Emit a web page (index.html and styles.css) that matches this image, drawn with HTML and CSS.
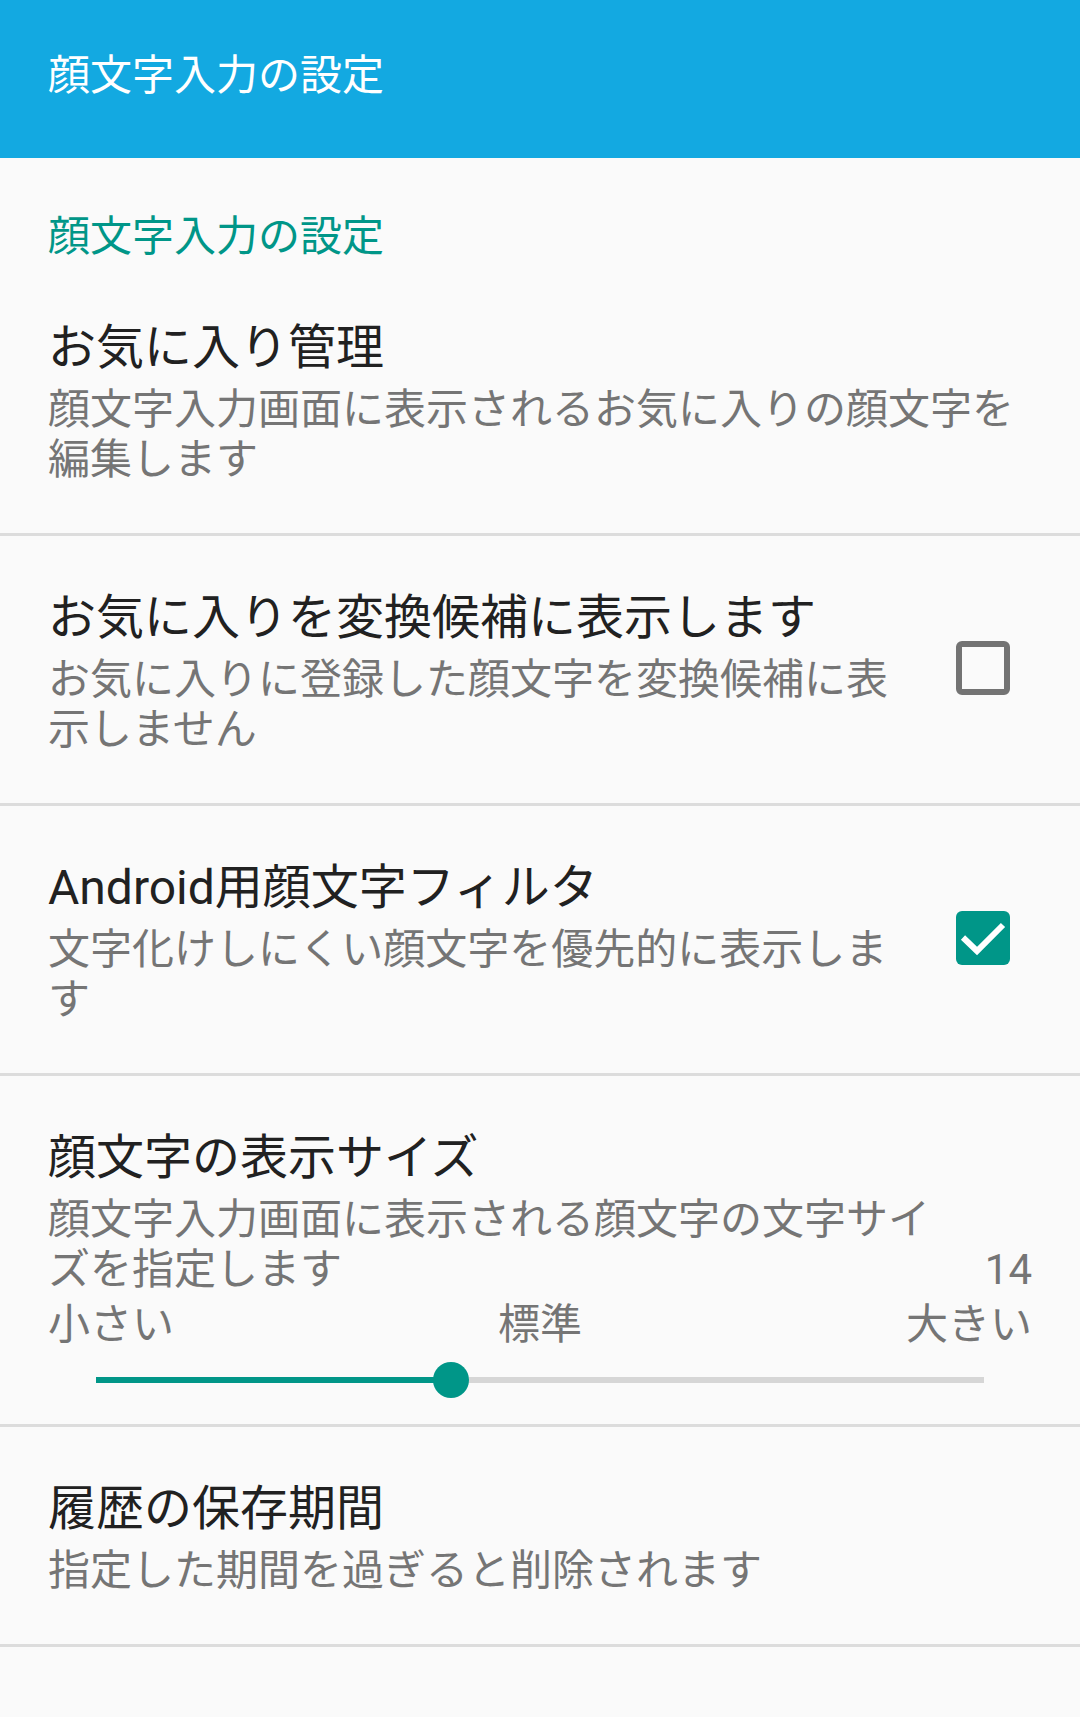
FILE: index.html
```html
<!DOCTYPE html>
<html lang="ja">
<head>
<meta charset="utf-8">
<title>顔文字入力の設定</title>
<link rel="stylesheet" href="styles.css">
</head>
<body>
<header class="appbar">
  <h1 class="appbar-title">顔文字入力の設定</h1>
</header>
<main class="prefs">
  <div class="category">顔文字入力の設定</div>

  <div class="pref">
    <div class="pref-text">
      <div class="pref-title">お気に入り管理</div>
      <div class="pref-summary">顔文字入力画面に表示されるお気に入りの顔文字を編集します</div>
    </div>
  </div>

  <div class="pref">
    <div class="pref-text">
      <div class="pref-title">お気に入りを変換候補に表示します</div>
      <div class="pref-summary">お気に入りに登録した顔文字を変換候補に表示しません</div>
    </div>
    <div class="widget"><span class="checkbox"></span></div>
  </div>

  <div class="pref">
    <div class="pref-text">
      <div class="pref-title">Android用顔文字フィルタ</div>
      <div class="pref-summary">文字化けしにくい顔文字を優先的に表示します</div>
    </div>
    <div class="widget">
      <span class="checkbox checked">
        <svg class="check" viewBox="0 0 54 54" width="54" height="54"><path d="M7 26.5 L21 40 L47 14" fill="none" stroke="#ffffff" stroke-width="6"/></svg>
      </span>
    </div>
  </div>

  <div class="pref pref-seek">
    <div class="seek-head">
      <div class="pref-text">
        <div class="pref-title">顔文字の表示サイズ</div>
        <div class="pref-summary">顔文字入力画面に表示される顔文字の文字サイズを指定します</div>
      </div>
      <div class="seek-value">14</div>
    </div>
    <div class="seek-labels"><span>小さい</span><span>標準</span><span>大きい</span></div>
    <div class="seek">
      <div class="seek-track">
        <div class="seek-fill" style="width:40%"></div>
        <div class="seek-thumb" style="left:40%"></div>
      </div>
    </div>
  </div>

  <div class="pref">
    <div class="pref-text">
      <div class="pref-title">履歴の保存期間</div>
      <div class="pref-summary">指定した期間を過ぎると削除されます</div>
    </div>
  </div>
</main>
</body>
</html>
```

FILE: styles.css
```css
html {
  background: #fafafa;
}
body {
  margin: 0;
  background: #fafafa;
  font-family: Roboto, "Noto Sans CJK JP", "Noto Sans", sans-serif;
  color: #212121;
}
.appbar {
  height: 158px;
  box-sizing: border-box;
  background: #13a9e1;
  padding: 54px 48px 0;
}
.appbar-title {
  margin: 0;
  font-size: 42px;
  line-height: 43px;
  font-weight: 400;
  color: #ffffff;
}
.category {
  padding: 58px 48px 8px;
  font-size: 42px;
  line-height: 42px;
  color: #009688;
}
.pref {
  display: flex;
  align-items: center;
  padding: 45px 48px 48px;
  border-bottom: 3px solid #dcdcdc;
}
.pref-text {
  flex: 1;
  min-width: 0;
}
.pref-title {
  font-size: 48px;
  line-height: 74px;
  color: #212121;
  white-space: nowrap;
}
.pref-summary {
  font-size: 42px;
  line-height: 50px;
  color: #757575;
}
.widget {
  display: flex;
  align-items: center;
  padding-left: 52px;
  margin-right: 22px;
}
.checkbox {
  display: block;
  width: 54px;
  height: 54px;
  box-sizing: border-box;
  border: 6px solid #737373;
  border-radius: 6px;
}
.checkbox.checked {
  border: none;
  background: #009688;
}
.check {
  display: block;
}
.pref-seek {
  display: block;
  padding-bottom: 14px;
}
.seek-head {
  display: flex;
  align-items: flex-end;
  gap: 30px;
}
.seek-value {
  font-size: 42px;
  line-height: 50px;
  color: #757575;
}
.seek-labels {
  display: flex;
  justify-content: space-between;
  margin-top: 5px;
  font-size: 42px;
  line-height: 50px;
  color: #757575;
}
.seek {
  height: 60px;
  display: flex;
  align-items: center;
  padding: 0 48px;
}
.seek-track {
  position: relative;
  flex: 1;
  height: 6px;
  background: #d6d6d6;
}
.seek-fill {
  height: 100%;
  background: #009688;
}
.seek-thumb {
  position: absolute;
  top: 50%;
  width: 36px;
  height: 36px;
  border-radius: 50%;
  background: #009688;
  transform: translate(-50%, -50%);
}
```
